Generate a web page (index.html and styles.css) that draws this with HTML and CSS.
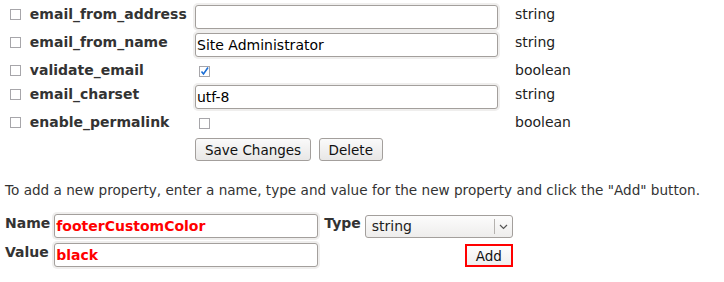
FILE: index.html
```html
<!DOCTYPE html>
<html>
  <head>
    <meta charset="utf-8" />
    <title>Site Properties</title>
    <link rel="stylesheet" href="styles.css">
  </head>
  <body>
    <form class="props">
      <table class="prop-table">
        <tr>
          <td class="prop-name"><input type="checkbox" class="chk"> email_from_address</td>
          <td class="prop-value"><input type="text" class="field" value=""></td>
          <td class="prop-type">string</td>
        </tr>
        <tr>
          <td class="prop-name"><input type="checkbox" class="chk"> email_from_name</td>
          <td class="prop-value"><input type="text" class="field" value="Site Administrator"></td>
          <td class="prop-type">string</td>
        </tr>
        <tr>
          <td class="prop-name"><input type="checkbox" class="chk"> validate_email</td>
          <td class="prop-value"><input type="checkbox" class="chk val-chk" checked></td>
          <td class="prop-type">boolean</td>
        </tr>
        <tr>
          <td class="prop-name"><input type="checkbox" class="chk"> email_charset</td>
          <td class="prop-value"><input type="text" class="field" value="utf-8"></td>
          <td class="prop-type">string</td>
        </tr>
        <tr>
          <td class="prop-name"><input type="checkbox" class="chk"> enable_permalink</td>
          <td class="prop-value"><input type="checkbox" class="chk val-chk"></td>
          <td class="prop-type">boolean</td>
        </tr>
        <tr>
          <td></td>
          <td class="actions">
            <button type="button" class="btn">Save Changes</button>
            <button type="button" class="btn">Delete</button>
          </td>
          <td></td>
        </tr>
      </table>
    </form>

    <p class="hint">To add a new property, enter a name, type and value for the new property and click the "Add" button.</p>

    <form class="add-form">
      <table class="add-table">
        <tr>
          <td class="add-label">Name</td>
          <td><input type="text" class="field field-new" value="footerCustomColor"></td>
          <td class="add-label type-label">Type</td>
          <td>
            <div class="select">
              <span class="select-text">string</span>
              <span class="select-arrow">
                <svg width="9" height="6" viewBox="0 0 9 6"><path d="M1 1 L4.5 4.5 L8 1" fill="none" stroke="#555" stroke-width="1.2"/></svg>
              </span>
            </div>
          </td>
        </tr>
        <tr>
          <td class="add-label">Value</td>
          <td><input type="text" class="field field-new" value="black"></td>
          <td colspan="2" class="add-cell"><button type="button" class="btn btn-add">Add</button></td>
        </tr>
      </table>
    </form>
  </body>
</html>
```

FILE: styles.css
```css
* {
  box-sizing: border-box;
}

body {
  margin: 0;
  padding: 3px 5px;
  font-family: "DejaVu Sans", sans-serif;
  font-size: 14px;
  line-height: 17px;
  color: #222;
  background: #fff;
}

form {
  margin: 0;
}

table {
  border-collapse: separate;
  border-spacing: 0;
}

td {
  padding: 2px 0;
  vertical-align: top;
}

/* property list */
.prop-name {
  width: 190px;
  padding-left: 5px;
  padding-top: 3px;
  font-weight: bold;
  color: #333;
  white-space: nowrap;
}

.prop-value {
  width: 320px;
}

.prop-type {
  padding-top: 3px;
}

.chk {
  -webkit-appearance: none;
  appearance: none;
  width: 11px;
  height: 11px;
  margin: 0 4px 0 0;
  border: 1px solid #a7a6aa;
  background: #fff;
  vertical-align: -1px;
}

.val-chk {
  display: block;
  margin: 5px 0 4px 4px;
}

.val-chk:checked {
  background: #fff url("data:image/svg+xml;utf8,<svg xmlns='http://www.w3.org/2000/svg' width='9' height='9' viewBox='0 0 9 9'><path d='M1.5 4.5 L3.5 7 L8 0.5' fill='none' stroke='%231c6fd6' stroke-width='1.6'/></svg>") no-repeat center;
}

.field {
  display: block;
  width: 303px;
  height: 24px;
  margin: 0;
  padding: 2px 1px;
  border: 1px solid #a39f9c;
  border-radius: 3px;
  box-shadow: 0 0 0 2px #efeeed;
  font-family: "DejaVu Sans", sans-serif;
  font-size: 14px;
  color: #000;
  background: #fff;
}

.actions {
  padding-top: 3px;
  padding-bottom: 3px;
}

.btn {
  height: 23px;
  padding: 0 9px;
  margin: 0 3px 0 0;
  border: 1px solid #a39f9c;
  border-radius: 3px;
  background: linear-gradient(#fafafa, #e8e7e6);
  font-family: "DejaVu Sans", sans-serif;
  font-size: 13.5px;
  color: #111;
}

.hint {
  margin: 18px 0 13px;
  font-size: 13.6px;
  color: #333;
}

/* add new property */
.add-table td {
  padding-bottom: 3px;
}

.add-label {
  font-weight: bold;
  color: #333;
  padding-top: 3px;
  padding-right: 4px;
}

.type-label {
  padding-left: 6px;
}

.field-new {
  width: 264px;
  color: #f00;
  font-weight: bold;
}

.select {
  display: flex;
  width: 148px;
  height: 23px;
  margin-top: 1px;
  border: 1px solid #a39f9c;
  border-radius: 3px;
  background: linear-gradient(#fcfcfc, #eeedec);
}

.select-text {
  flex: 1;
  padding: 2px 6px;
}

.select-arrow {
  width: 18px;
  border-left: 1px solid #b5b2af;
  margin: 3px 0;
  display: flex;
  align-items: center;
  justify-content: center;
}

.add-cell {
  text-align: right;
}

.btn-add {
  margin: 1px 0 0;
  padding: 0 9px;
  height: 23px;
  border: 2px solid #f00;
  border-radius: 0;
  background: linear-gradient(#fdfdfd, #efefef);
}
```
